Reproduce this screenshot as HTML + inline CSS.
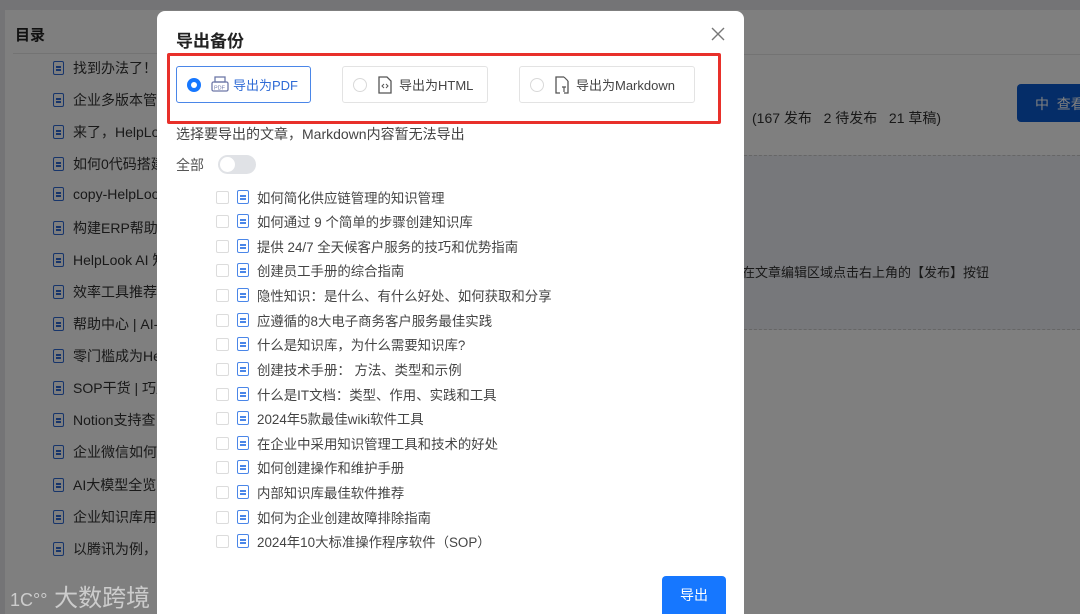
<!DOCTYPE html>
<html style="overflow:hidden;width:1080px;height:614px"><head><meta charset="utf-8"><style>
*{margin:0;padding:0;box-sizing:border-box}
body{width:1080px;height:614px;overflow:hidden;position:relative;font-family:"Liberation Sans","Noto Sans CJK SC",sans-serif;background:#e8e8ec}
.abs{position:absolute}
.card{left:5px;top:10px;width:1075px;height:604px;background:#fff}
.side-item{position:absolute;left:53px;font-size:14px;color:#333;white-space:nowrap;display:flex;align-items:center}
.di{display:inline-block;width:11px;height:14px;border:1.6px solid #2f6bd6;border-radius:2px;position:relative;margin-right:9px}
.di:before,.di:after{content:"";position:absolute;left:2px;right:2px;height:1.5px;background:#2f6bd6}
.di:before{top:4px}.di:after{top:7px}
.ov{left:0;top:0;width:1080px;height:614px;background:rgba(0,0,0,0.5)}
.modal{left:157px;top:11px;width:587px;height:603px;background:#fff;border-radius:8px 8px 0 0}
.opt{position:absolute;top:66px;height:37px;border:1px solid #e3e3e3;border-radius:3px;font-size:13px;color:#444;display:flex;align-items:center}
.rad{width:14px;height:14px;border:1px solid #d9d9d9;border-radius:50%;margin:0 10px 0 10px}
.li{position:absolute;left:216px;font-size:13.4px;color:#444;display:flex;align-items:center;white-space:nowrap}
.cb{width:13px;height:13px;border:1px solid #dcdcdc;border-radius:2px;margin-right:8px}
.li .di{border-color:#4a86e8;margin-right:8px;width:12px;height:14px}
.li .di:before,.li .di:after{background:#4a86e8}
</style></head><body>
<div class="abs card"></div>
<div class="abs" style="left:15px;top:24px;font-size:15px;font-weight:bold;color:#222">目录</div>
<div class="abs" style="left:13px;top:53px;width:144px;height:1px;background:#e6e6e6"></div>
<div class="abs" style="left:157px;top:54px;width:923px;height:1px;background:#e6e6e6"></div>
<div class="side-item" style="top:58px"><span class="di"></span>找到办法了！</div>
<div class="side-item" style="top:90px"><span class="di"></span>企业多版本管理</div>
<div class="side-item" style="top:122px"><span class="di"></span>来了，HelpLook</div>
<div class="side-item" style="top:154px"><span class="di"></span>如何0代码搭建</div>
<div class="side-item" style="top:186px"><span class="di"></span>copy-HelpLook</div>
<div class="side-item" style="top:218px"><span class="di"></span>构建ERP帮助中</div>
<div class="side-item" style="top:250px"><span class="di"></span>HelpLook AI 知</div>
<div class="side-item" style="top:282px"><span class="di"></span>效率工具推荐</div>
<div class="side-item" style="top:314px"><span class="di"></span>帮助中心 | AI-</div>
<div class="side-item" style="top:346px"><span class="di"></span>零门槛成为He</div>
<div class="side-item" style="top:378px"><span class="di"></span>SOP干货 | 巧用</div>
<div class="side-item" style="top:410px"><span class="di"></span>Notion支持查</div>
<div class="side-item" style="top:442px"><span class="di"></span>企业微信如何</div>
<div class="side-item" style="top:475px"><span class="di"></span>AI大模型全览</div>
<div class="side-item" style="top:507px"><span class="di"></span>企业知识库用不</div>
<div class="side-item" style="top:539px"><span class="di"></span>以腾讯为例，手</div>
<div class="abs" style="left:752px;top:108px;font-size:14px;color:#333;white-space:nowrap">(167 发布&nbsp;&nbsp;&nbsp;2 待发布&nbsp;&nbsp;&nbsp;21 草稿)</div>
<div class="abs" style="left:1017px;top:84px;width:80px;height:38px;background:#0a5ad0;border-radius:4px;color:#fff;font-size:14px;padding:10px 0 0 18px">中&nbsp;&nbsp;查看</div>
<div class="abs" style="left:744px;top:155px;width:336px;height:175px;background:#eef0f6;border-top:1px dashed #ccc;border-bottom:1px dashed #ccc"></div>
<div class="abs" style="left:742px;top:262px;font-size:13px;color:#333;white-space:nowrap">在文章编辑区域点击右上角的【发布】按钮</div>
<div class="abs ov"></div>
<div class="abs" style="left:10px;top:578px;font-size:24px;color:rgba(255,255,255,0.6);white-space:nowrap"><span style="font-size:18px">1C°°</span> 大数跨境</div>
<div class="abs modal"></div>
<div class="abs" style="left:176px;top:27px;font-size:17px;font-weight:bold;color:#222">导出备份</div>
<svg class="abs" style="left:711px;top:27px" width="14" height="14"><path d="M1 1L13 13M13 1L1 13" stroke="#777" stroke-width="1.4"/></svg>
<div class="abs" style="left:167px;top:53px;width:554px;height:71px;border:3px solid #e8302a;border-radius:2px"></div>
<div class="opt" style="left:176px;width:135px;border-color:#4a86e8;color:#2f6bd6">
<div style="width:14px;height:14px;border-radius:50%;background:#1677ff;margin:0 10px;position:relative"><div style="position:absolute;left:4px;top:4px;width:6px;height:6px;border-radius:50%;background:#fff"></div></div>
<svg width="18" height="18" style="margin-right:4px"><rect x="4" y="1" width="10" height="5" fill="none" stroke="#6e78a8" stroke-width="1.3"/><rect x="1" y="6" width="16" height="9" rx="1.5" fill="none" stroke="#6e78a8" stroke-width="1.3"/><text x="3" y="13.5" font-size="5.5" fill="#6e78a8" font-family="Liberation Sans">PDF</text></svg>导出为PDF</div>
<div class="opt" style="left:342px;width:146px"><div class="rad"></div><svg width="16" height="18" style="margin-right:6px"><path d="M2 1H10L14 5V17H2Z" fill="none" stroke="#555" stroke-width="1.3"/><path d="M7 8L5 10L7 12M9 8L11 10L9 12" fill="none" stroke="#555" stroke-width="1"/></svg>导出为HTML</div>
<div class="opt" style="left:519px;width:176px"><div class="rad"></div><svg width="16" height="18" style="margin-right:6px"><path d="M10 1H2V17H6M14 5V17H10" fill="none" stroke="#555" stroke-width="1.3"/><path d="M10 1L14 5M8 11H12M10 11V16" fill="none" stroke="#555" stroke-width="1.2"/></svg>导出为Markdown</div>
<div class="abs" style="left:176px;top:124px;font-size:14px;color:#444">选择要导出的文章，Markdown内容暂无法导出</div>
<div class="abs" style="left:176px;top:155px;font-size:14px;color:#555">全部</div>
<div class="abs" style="left:218px;top:155px;width:38px;height:19px;border-radius:10px;background:#e0e2e6"><div style="position:absolute;left:2px;top:2px;width:15px;height:15px;border-radius:50%;background:#fff"></div></div>
<div class="li" style="top:187px"><div class="cb"></div><span class="di"></span>如何简化供应链管理的知识管理</div>
<div class="li" style="top:211px"><div class="cb"></div><span class="di"></span>如何通过 9 个简单的步骤创建知识库</div>
<div class="li" style="top:236px"><div class="cb"></div><span class="di"></span>提供 24/7 全天候客户服务的技巧和优势指南</div>
<div class="li" style="top:260px"><div class="cb"></div><span class="di"></span>创建员工手册的综合指南</div>
<div class="li" style="top:285px"><div class="cb"></div><span class="di"></span>隐性知识：是什么、有什么好处、如何获取和分享</div>
<div class="li" style="top:310px"><div class="cb"></div><span class="di"></span>应遵循的8大电子商务客户服务最佳实践</div>
<div class="li" style="top:334px"><div class="cb"></div><span class="di"></span>什么是知识库，为什么需要知识库?</div>
<div class="li" style="top:359px"><div class="cb"></div><span class="di"></span>创建技术手册： 方法、类型和示例</div>
<div class="li" style="top:384px"><div class="cb"></div><span class="di"></span>什么是IT文档：类型、作用、实践和工具</div>
<div class="li" style="top:408px"><div class="cb"></div><span class="di"></span>2024年5款最佳wiki软件工具</div>
<div class="li" style="top:433px"><div class="cb"></div><span class="di"></span>在企业中采用知识管理工具和技术的好处</div>
<div class="li" style="top:457px"><div class="cb"></div><span class="di"></span>如何创建操作和维护手册</div>
<div class="li" style="top:482px"><div class="cb"></div><span class="di"></span>内部知识库最佳软件推荐</div>
<div class="li" style="top:507px"><div class="cb"></div><span class="di"></span>如何为企业创建故障排除指南</div>
<div class="li" style="top:531px"><div class="cb"></div><span class="di"></span>2024年10大标准操作程序软件（SOP）</div>
<div class="abs" style="left:662px;top:576px;width:64px;height:38px;background:#1677ff;border-radius:4px 4px 0 0;color:#fff;font-size:14px;text-align:center;line-height:38px">导出</div>
</body></html>
